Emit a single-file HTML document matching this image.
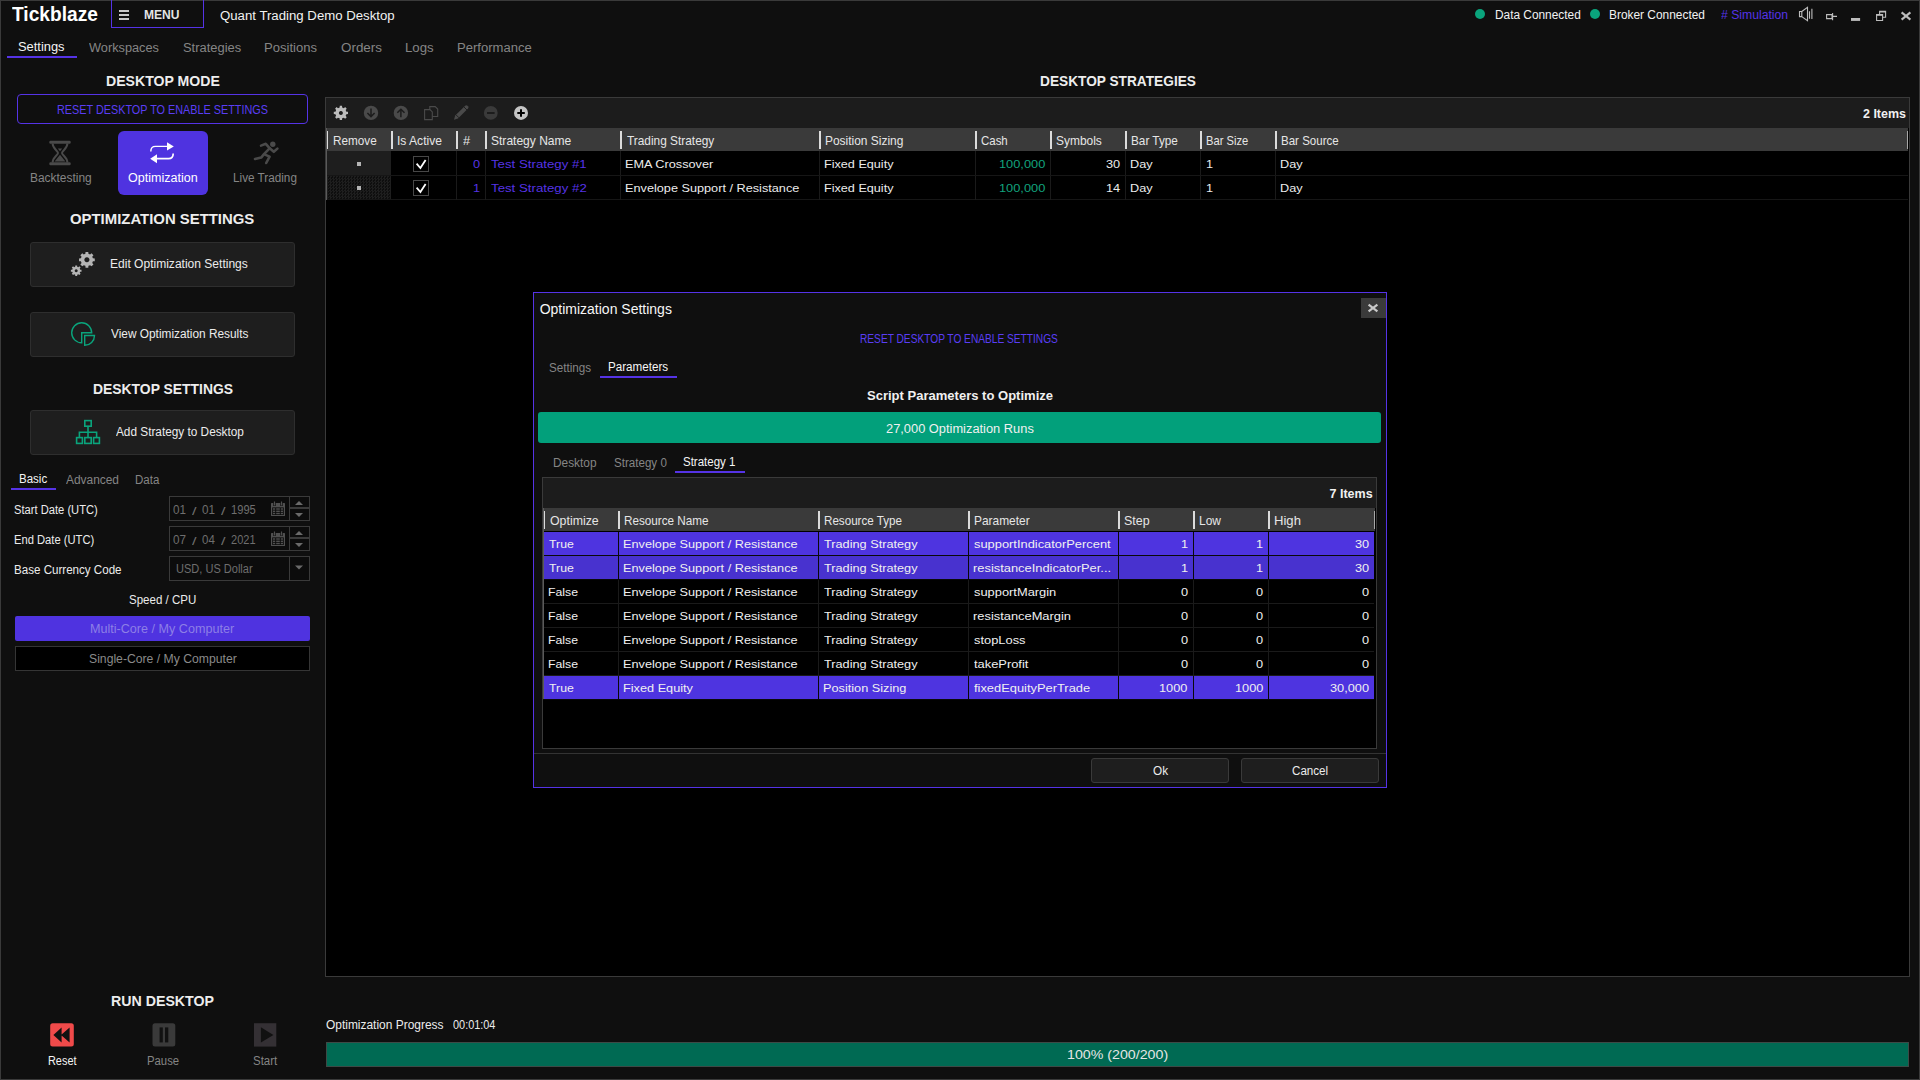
<!DOCTYPE html>
<html><head><meta charset="utf-8"><style>
*{box-sizing:border-box;margin:0;padding:0}
html,body{width:1920px;height:1080px;overflow:hidden;background:#0f0f0f;font-family:"Liberation Sans",sans-serif;color:#ececec}
.a{position:absolute}
.t{position:absolute;white-space:nowrap;line-height:1;transform-origin:0 0}
</style></head><body>
<div class="a" style="left:0;top:0;width:1920px;height:1080px;border:1px solid #3a3a3a"></div>
<div class="t" style="font-size:20px;color:#ffffff;font-weight:bold;left:11.78px;top:4.00px;transform:scaleX(0.9574);">Tickblaze</div>
<div class="a" style="left:111px;top:0px;width:93px;height:28px;border:1px solid #5533e6;border-top:none"></div>
<div class="a" style="left:119px;top:10px;width:10px;height:2px;background:#c8c8c8"></div>
<div class="a" style="left:119px;top:14px;width:10px;height:2px;background:#c8c8c8"></div>
<div class="a" style="left:119px;top:18px;width:10px;height:2px;background:#c8c8c8"></div>
<div class="t" style="font-size:12.5px;color:#e4e4e4;font-weight:bold;left:143.59px;top:9.00px;transform:scaleX(0.9655);">MENU</div>
<div class="t" style="font-size:12.5px;color:#f2f2f2;left:219.87px;top:10.00px;transform:scaleX(1.0563);">Quant Trading Demo Desktop</div>
<div class="a" style="left:1475px;top:9px;width:10px;height:10px;border-radius:50%;background:#0aa47c"></div>
<div class="t" style="font-size:12.3px;color:#f2f2f2;left:1494.53px;top:9.00px;transform:scaleX(0.9647);">Data Connected</div>
<div class="a" style="left:1590px;top:9px;width:10px;height:10px;border-radius:50%;background:#0aa47c"></div>
<div class="t" style="font-size:12.3px;color:#f2f2f2;left:1609.22px;top:9.00px;transform:scaleX(0.9679);">Broker Connected</div>
<div class="t" style="font-size:12.3px;color:#5533e6;left:1720.65px;top:9.00px;transform:scaleX(0.9922);"># Simulation</div>
<div class="t" style="font-size:12.3px;color:#f4f4f4;left:18.41px;top:41.00px;transform:scaleX(1.0476);">Settings</div>
<div class="a" style="left:7px;top:56px;width:70px;height:2px;background:#5533e6"></div>
<div class="t" style="font-size:12.3px;color:#858585;left:89.24px;top:42.00px;transform:scaleX(1.0368);">Workspaces</div>
<div class="t" style="font-size:12.3px;color:#858585;left:182.91px;top:42.00px;transform:scaleX(1.0502);">Strategies</div>
<div class="t" style="font-size:12.3px;color:#858585;left:264.13px;top:42.00px;transform:scaleX(1.0608);">Positions</div>
<div class="t" style="font-size:12.3px;color:#858585;left:340.96px;top:42.00px;transform:scaleX(1.0912);">Orders</div>
<div class="t" style="font-size:12.3px;color:#858585;left:405.22px;top:42.00px;transform:scaleX(1.0746);">Logs</div>
<div class="t" style="font-size:12.3px;color:#858585;left:457.33px;top:42.00px;transform:scaleX(1.0617);">Performance</div>
<div class="t" style="font-size:15.5px;color:#ededed;font-weight:bold;left:105.56px;top:73.00px;transform:scaleX(0.9090);">DESKTOP MODE</div>
<div class="a" style="left:17px;top:94px;width:291px;height:30px;border:1px solid #5533e6;border-radius:4px"></div>
<div class="t" style="font-size:12.5px;color:#5a3ef5;left:56.51px;top:104.00px;transform:scaleX(0.8669);">RESET DESKTOP TO ENABLE SETTINGS</div>
<div class="a" style="left:118px;top:131px;width:90px;height:64px;border-radius:6px;background:#4f33e0"></div>
<div class="t" style="font-size:12px;color:#858585;left:29.62px;top:172.00px;transform:scaleX(0.9952);">Backtesting</div>
<div class="t" style="font-size:12px;color:#ffffff;left:128.01px;top:172.00px;transform:scaleX(1.0451);">Optimization</div>
<div class="t" style="font-size:12px;color:#858585;left:233.44px;top:172.00px;transform:scaleX(0.9777);">Live Trading</div>
<div class="t" style="font-size:15.5px;color:#ededed;font-weight:bold;left:70.39px;top:211.00px;transform:scaleX(0.9611);">OPTIMIZATION SETTINGS</div>
<div class="a" style="left:30px;top:242px;width:265px;height:45px;background:#1e1e1e;border:1px solid #2e2e2e;border-radius:3px"></div>
<div class="t" style="font-size:12px;color:#ececec;left:110.41px;top:258.00px;transform:scaleX(1.0030);">Edit Optimization Settings</div>
<div class="a" style="left:30px;top:312px;width:265px;height:45px;background:#1e1e1e;border:1px solid #2e2e2e;border-radius:3px"></div>
<div class="t" style="font-size:12px;color:#ececec;left:111.05px;top:328.00px;transform:scaleX(0.9878);">View Optimization Results</div>
<div class="t" style="font-size:15.5px;color:#ededed;font-weight:bold;left:92.67px;top:381.00px;transform:scaleX(0.8968);">DESKTOP SETTINGS</div>
<div class="a" style="left:30px;top:410px;width:265px;height:45px;background:#1e1e1e;border:1px solid #2e2e2e;border-radius:3px"></div>
<div class="t" style="font-size:12px;color:#ececec;left:116.18px;top:426.00px;transform:scaleX(0.9834);">Add Strategy to Desktop</div>
<div class="t" style="font-size:12px;color:#f4f4f4;left:19.36px;top:473.00px;transform:scaleX(0.9592);">Basic</div>
<div class="a" style="left:11px;top:488px;width:45px;height:2px;background:#5533e6"></div>
<div class="t" style="font-size:12px;color:#858585;left:65.58px;top:474.00px;transform:scaleX(0.9928);">Advanced</div>
<div class="t" style="font-size:12px;color:#858585;left:135.46px;top:474.00px;transform:scaleX(0.9600);">Data</div>
<div class="t" style="font-size:12px;color:#ececec;left:14.49px;top:504.00px;transform:scaleX(0.9310);">Start Date (UTC)</div>
<div class="t" style="font-size:12px;color:#ececec;left:14.08px;top:534.00px;transform:scaleX(0.9324);">End Date (UTC)</div>
<div class="t" style="font-size:12px;color:#ececec;left:14.05px;top:564.00px;transform:scaleX(0.9657);">Base Currency Code</div>
<div class="a" style="left:169px;top:496px;width:141px;height:25px;border:1px solid #3a3a3a;background:#0c0c0c"></div>
<div class="a" style="left:289px;top:496px;width:1px;height:25px;background:#3a3a3a"></div>
<div class="a" style="left:289px;top:507px;width:21px;height:2px;background:#3a3a3a"></div>
<div class="t" style="font-size:12px;color:#6e6e6e;left:172.54px;top:504.00px;transform:scaleX(0.9752);">01</div>
<div class="t" style="font-size:12px;color:#6e6e6e;left:201.54px;top:504.00px;transform:scaleX(0.9752);">01</div>
<div class="t" style="font-size:12px;color:#6e6e6e;left:231.15px;top:504.00px;transform:scaleX(0.9294);">1995</div>
<div class="t" style="font-size:10px;color:#6e6e6e;left:192.00px;top:507.00px;transform:scaleX(1.6180);">/</div>
<div class="t" style="font-size:10px;color:#6e6e6e;left:220.60px;top:507.00px;transform:scaleX(1.6180);">/</div>
<div class="a" style="left:169px;top:526px;width:141px;height:25px;border:1px solid #3a3a3a;background:#0c0c0c"></div>
<div class="a" style="left:289px;top:526px;width:1px;height:25px;background:#3a3a3a"></div>
<div class="a" style="left:289px;top:537px;width:21px;height:2px;background:#3a3a3a"></div>
<div class="t" style="font-size:12px;color:#6e6e6e;left:172.54px;top:534.00px;transform:scaleX(0.9766);">07</div>
<div class="t" style="font-size:12px;color:#6e6e6e;left:201.55px;top:534.00px;transform:scaleX(0.9570);">04</div>
<div class="t" style="font-size:12px;color:#6e6e6e;left:231.44px;top:534.00px;transform:scaleX(0.9211);">2021</div>
<div class="t" style="font-size:10px;color:#6e6e6e;left:192.00px;top:537.00px;transform:scaleX(1.6180);">/</div>
<div class="t" style="font-size:10px;color:#6e6e6e;left:220.60px;top:537.00px;transform:scaleX(1.6180);">/</div>
<div class="a" style="left:169px;top:556px;width:141px;height:25px;border:1px solid #3a3a3a;background:#0c0c0c"></div>
<div class="a" style="left:289px;top:556px;width:1px;height:25px;background:#3a3a3a"></div>
<div class="t" style="font-size:12px;color:#6e6e6e;left:175.65px;top:563.00px;transform:scaleX(0.9193);">USD, US Dollar</div>
<div class="t" style="font-size:12px;color:#ececec;left:128.68px;top:594.00px;transform:scaleX(0.9595);">Speed / CPU</div>
<div class="a" style="left:15px;top:616px;width:295px;height:25px;background:#4f33e0;border-radius:2px"></div>
<div class="t" style="font-size:12px;color:#8d7fe6;left:90.27px;top:623.00px;transform:scaleX(1.0493);">Multi-Core / My Computer</div>
<div class="a" style="left:15px;top:646px;width:295px;height:25px;background:#000;border:1px solid #353535"></div>
<div class="t" style="font-size:12px;color:#8a8a8a;left:88.65px;top:653.00px;transform:scaleX(1.0163);">Single-Core / My Computer</div>
<div class="t" style="font-size:15.5px;color:#ededed;font-weight:bold;left:110.65px;top:993.00px;transform:scaleX(0.9155);">RUN DESKTOP</div>
<div class="t" style="font-size:12px;color:#f4f4f4;left:47.51px;top:1055.00px;transform:scaleX(0.9080);">Reset</div>
<div class="t" style="font-size:12px;color:#858585;left:147.37px;top:1055.00px;transform:scaleX(0.9442);">Pause</div>
<div class="t" style="font-size:12px;color:#858585;left:252.78px;top:1055.00px;transform:scaleX(0.9591);">Start</div>
<div class="t" style="font-size:15.5px;color:#ededed;font-weight:bold;left:1039.58px;top:73.00px;transform:scaleX(0.8833);">DESKTOP STRATEGIES</div>
<div class="a" style="left:325px;top:97px;width:1585px;height:880px;background:#000;border:1px solid #3a3a3a"></div>
<div class="a" style="left:326px;top:98px;width:1583px;height:30px;background:#1c1c1c"></div>
<div class="t" style="font-size:12.5px;color:#f0f0f0;font-weight:bold;left:1862.77px;top:108.00px;transform:scaleX(0.9965);">2 Items</div>
<div class="a" style="left:326px;top:128px;width:1582px;height:23px;background:#3a3a3a"></div>
<div class="a" style="left:326px;top:131px;width:2px;height:18px;background:#dcdcdc"></div>
<div class="a" style="left:391px;top:131px;width:2px;height:18px;background:#dcdcdc"></div>
<div class="a" style="left:456px;top:131px;width:2px;height:18px;background:#dcdcdc"></div>
<div class="a" style="left:485px;top:131px;width:2px;height:18px;background:#dcdcdc"></div>
<div class="a" style="left:620px;top:131px;width:2px;height:18px;background:#dcdcdc"></div>
<div class="a" style="left:819px;top:131px;width:2px;height:18px;background:#dcdcdc"></div>
<div class="a" style="left:975px;top:131px;width:2px;height:18px;background:#dcdcdc"></div>
<div class="a" style="left:1050px;top:131px;width:2px;height:18px;background:#dcdcdc"></div>
<div class="a" style="left:1125px;top:131px;width:2px;height:18px;background:#dcdcdc"></div>
<div class="a" style="left:1200px;top:131px;width:2px;height:18px;background:#dcdcdc"></div>
<div class="a" style="left:1275px;top:131px;width:2px;height:18px;background:#dcdcdc"></div>
<div class="a" style="left:1907px;top:131px;width:1px;height:18px;background:#a8a8a8"></div>
<div class="t" style="font-size:12.2px;color:#e6e6e6;left:332.64px;top:135.00px;transform:scaleX(0.9624);">Remove</div>
<div class="t" style="font-size:12.2px;color:#e6e6e6;left:397.29px;top:135.00px;transform:scaleX(0.9903);">Is Active</div>
<div class="t" style="font-size:12.2px;color:#e6e6e6;left:462.94px;top:135.00px;transform:scaleX(1.0498);">#</div>
<div class="t" style="font-size:12.2px;color:#e6e6e6;left:491.35px;top:135.00px;transform:scaleX(0.9875);">Strategy Name</div>
<div class="t" style="font-size:12.2px;color:#e6e6e6;left:627.23px;top:135.00px;transform:scaleX(0.9736);">Trading Strategy</div>
<div class="t" style="font-size:12.2px;color:#e6e6e6;left:825.42px;top:135.00px;transform:scaleX(0.9800);">Position Sizing</div>
<div class="t" style="font-size:12.2px;color:#e6e6e6;left:981.32px;top:135.00px;transform:scaleX(0.9393);">Cash</div>
<div class="t" style="font-size:12.2px;color:#e6e6e6;left:1056.36px;top:135.00px;transform:scaleX(0.9795);">Symbols</div>
<div class="t" style="font-size:12.2px;color:#e6e6e6;left:1131.33px;top:135.00px;transform:scaleX(0.9656);">Bar Type</div>
<div class="t" style="font-size:12.2px;color:#e6e6e6;left:1206.38px;top:135.00px;transform:scaleX(0.9164);">Bar Size</div>
<div class="t" style="font-size:12.2px;color:#e6e6e6;left:1281.35px;top:135.00px;transform:scaleX(0.9457);">Bar Source</div>
<div class="a" style="left:326px;top:151px;width:65px;height:24px;background:#1e1e1e"></div>
<div class="a" style="left:326px;top:175px;width:1582px;height:1px;background:#161616"></div>
<div class="a" style="left:456px;top:151px;width:1px;height:24px;background:#1a1a1a"></div>
<div class="a" style="left:485px;top:151px;width:1px;height:24px;background:#1a1a1a"></div>
<div class="a" style="left:620px;top:151px;width:1px;height:24px;background:#1a1a1a"></div>
<div class="a" style="left:819px;top:151px;width:1px;height:24px;background:#1a1a1a"></div>
<div class="a" style="left:975px;top:151px;width:1px;height:24px;background:#1a1a1a"></div>
<div class="a" style="left:1050px;top:151px;width:1px;height:24px;background:#1a1a1a"></div>
<div class="a" style="left:1125px;top:151px;width:1px;height:24px;background:#1a1a1a"></div>
<div class="a" style="left:1200px;top:151px;width:1px;height:24px;background:#1a1a1a"></div>
<div class="a" style="left:1275px;top:151px;width:1px;height:24px;background:#1a1a1a"></div>
<div class="a" style="left:357px;top:162px;width:4px;height:4px;background:#b4b4b4"></div>
<div class="a" style="left:413px;top:156px;width:16px;height:16px;border:1px solid #474747;background:#000"></div>
<svg class="a" style="left:413px;top:156px" width="16" height="16" viewBox="413 156 16 16"><path d="M416.6,163.6 L420.4,168 L425.6,160" fill="none" stroke="#ffffff" stroke-width="1.8"/></svg>
<div class="t" style="font-size:11.6px;color:#5533e6;left:472.80px;top:158.00px;transform:scaleX(1.1000);">0</div>
<div class="t" style="font-size:11.6px;color:#5533e6;left:490.80px;top:158.00px;transform:scaleX(1.1428);">Test Strategy #1</div>
<div class="t" style="font-size:11.6px;color:#ececec;left:625.16px;top:158.00px;transform:scaleX(1.0950);">EMA Crossover</div>
<div class="t" style="font-size:11.6px;color:#ececec;left:824.16px;top:158.00px;transform:scaleX(1.0888);">Fixed Equity</div>
<div class="t" style="font-size:11.6px;color:#12a37e;left:998.62px;top:158.00px;transform:scaleX(1.1039);">100,000</div>
<div class="t" style="font-size:11.6px;color:#ececec;left:1106.10px;top:158.00px;transform:scaleX(1.1000);">30</div>
<div class="t" style="font-size:11.6px;color:#ececec;left:1130.16px;top:158.00px;transform:scaleX(1.0950);">Day</div>
<div class="t" style="font-size:11.6px;color:#ececec;left:1205.93px;top:158.00px;transform:scaleX(1.0950);">1</div>
<div class="t" style="font-size:11.6px;color:#ececec;left:1280.46px;top:158.00px;transform:scaleX(1.0950);">Day</div>
<div class="a" style="left:326px;top:176px;width:65px;height:24px;background:repeating-conic-gradient(#1e1e1e 0 25%, #0e0e0e 0 50%) 0 0/3px 3px"></div>
<div class="a" style="left:326px;top:199px;width:1582px;height:1px;background:#161616"></div>
<div class="a" style="left:456px;top:176px;width:1px;height:24px;background:#1a1a1a"></div>
<div class="a" style="left:485px;top:176px;width:1px;height:24px;background:#1a1a1a"></div>
<div class="a" style="left:620px;top:176px;width:1px;height:24px;background:#1a1a1a"></div>
<div class="a" style="left:819px;top:176px;width:1px;height:24px;background:#1a1a1a"></div>
<div class="a" style="left:975px;top:176px;width:1px;height:24px;background:#1a1a1a"></div>
<div class="a" style="left:1050px;top:176px;width:1px;height:24px;background:#1a1a1a"></div>
<div class="a" style="left:1125px;top:176px;width:1px;height:24px;background:#1a1a1a"></div>
<div class="a" style="left:1200px;top:176px;width:1px;height:24px;background:#1a1a1a"></div>
<div class="a" style="left:1275px;top:176px;width:1px;height:24px;background:#1a1a1a"></div>
<div class="a" style="left:357px;top:186px;width:4px;height:4px;background:#b4b4b4"></div>
<div class="a" style="left:413px;top:180px;width:16px;height:16px;border:1px solid #474747;background:#000"></div>
<svg class="a" style="left:413px;top:180px" width="16" height="16" viewBox="413 180 16 16"><path d="M416.6,187.6 L420.4,192 L425.6,184" fill="none" stroke="#ffffff" stroke-width="1.8"/></svg>
<div class="t" style="font-size:11.6px;color:#5533e6;left:472.92px;top:182.00px;transform:scaleX(1.1000);">1</div>
<div class="t" style="font-size:11.6px;color:#5533e6;left:490.80px;top:182.00px;transform:scaleX(1.1430);">Test Strategy #2</div>
<div class="t" style="font-size:11.6px;color:#ececec;left:625.16px;top:182.00px;transform:scaleX(1.0950);">Envelope Support / Resistance</div>
<div class="t" style="font-size:11.6px;color:#ececec;left:824.16px;top:182.00px;transform:scaleX(1.0888);">Fixed Equity</div>
<div class="t" style="font-size:11.6px;color:#12a37e;left:998.62px;top:182.00px;transform:scaleX(1.1039);">100,000</div>
<div class="t" style="font-size:11.6px;color:#ececec;left:1105.98px;top:182.00px;transform:scaleX(1.1000);">14</div>
<div class="t" style="font-size:11.6px;color:#ececec;left:1130.16px;top:182.00px;transform:scaleX(1.0950);">Day</div>
<div class="t" style="font-size:11.6px;color:#ececec;left:1205.93px;top:182.00px;transform:scaleX(1.0950);">1</div>
<div class="t" style="font-size:11.6px;color:#ececec;left:1280.46px;top:182.00px;transform:scaleX(1.0950);">Day</div>
<div class="a" style="left:326px;top:128px;width:1px;height:72px;background:#5a5a5a"></div>
<div class="t" style="font-size:12px;color:#ececec;left:325.83px;top:1019.00px;transform:scaleX(0.9953);">Optimization Progress</div>
<div class="t" style="font-size:12px;color:#ececec;left:452.57px;top:1019.00px;transform:scaleX(0.9085);">00:01:04</div>
<div class="a" style="left:326px;top:1042px;width:1583px;height:25px;background:#006a53;border:1px solid #3c4a46"></div>
<div class="t" style="font-size:13px;color:#e6e6e6;left:1067.42px;top:1048.00px;transform:scaleX(1.0935);">100% (200/200)</div>
<div class="a" style="left:533px;top:292px;width:854px;height:496px;background:#0f0f0f;border:1px solid #5533e6"></div>
<div class="t" style="font-size:14px;color:#f6f6f6;left:539.64px;top:302.00px;">Optimization Settings</div>
<div class="a" style="left:1361px;top:298px;width:25px;height:20px;background:#3a3a3a"></div>
<div class="t" style="font-size:12.5px;color:#5a3ef5;left:860.47px;top:333.00px;transform:scaleX(0.8131);">RESET DESKTOP TO ENABLE SETTINGS</div>
<div class="t" style="font-size:12px;color:#858585;left:548.87px;top:362.00px;transform:scaleX(0.9721);">Settings</div>
<div class="t" style="font-size:12px;color:#f6f6f6;left:608.45px;top:361.00px;transform:scaleX(0.9684);">Parameters</div>
<div class="a" style="left:600px;top:376px;width:77px;height:2px;background:#5533e6"></div>
<div class="t" style="font-size:13.5px;color:#f0f0f0;font-weight:bold;left:866.62px;top:389.00px;transform:scaleX(0.9648);">Script Parameters to Optimize</div>
<div class="a" style="left:538px;top:412px;width:843px;height:31px;background:#02a07b;border-radius:3px"></div>
<div class="t" style="font-size:12px;color:#f0f0f0;left:886.05px;top:423.00px;transform:scaleX(1.0705);">27,000 Optimization Runs</div>
<div class="t" style="font-size:12px;color:#858585;left:552.53px;top:457.00px;transform:scaleX(0.9896);">Desktop</div>
<div class="t" style="font-size:12px;color:#858585;left:613.87px;top:457.00px;transform:scaleX(0.9657);">Strategy 0</div>
<div class="t" style="font-size:12px;color:#f6f6f6;left:683.48px;top:456.00px;transform:scaleX(0.9567);">Strategy 1</div>
<div class="a" style="left:675px;top:471px;width:70px;height:2px;background:#5533e6"></div>
<div class="a" style="left:542px;top:477px;width:835px;height:272px;background:#000;border:1px solid #3a3a3a"></div>
<div class="a" style="left:543px;top:478px;width:833px;height:30px;background:#1c1c1c"></div>
<div class="t" style="font-size:12.5px;color:#f0f0f0;font-weight:bold;left:1329.56px;top:488.00px;">7 Items</div>
<div class="a" style="left:543px;top:508px;width:832px;height:23px;background:#3a3a3a"></div>
<div class="a" style="left:543px;top:511px;width:2px;height:18px;background:#dcdcdc"></div>
<div class="a" style="left:618px;top:511px;width:2px;height:18px;background:#dcdcdc"></div>
<div class="a" style="left:818px;top:511px;width:2px;height:18px;background:#dcdcdc"></div>
<div class="a" style="left:968px;top:511px;width:2px;height:18px;background:#dcdcdc"></div>
<div class="a" style="left:1118px;top:511px;width:2px;height:18px;background:#dcdcdc"></div>
<div class="a" style="left:1193px;top:511px;width:2px;height:18px;background:#dcdcdc"></div>
<div class="a" style="left:1268px;top:511px;width:2px;height:18px;background:#dcdcdc"></div>
<div class="a" style="left:1374px;top:511px;width:1px;height:18px;background:#a8a8a8"></div>
<div class="t" style="font-size:12.2px;color:#e6e6e6;left:549.61px;top:515.00px;transform:scaleX(1.0133);">Optimize</div>
<div class="t" style="font-size:12.2px;color:#e6e6e6;left:624.24px;top:515.00px;transform:scaleX(0.9605);">Resource Name</div>
<div class="t" style="font-size:12.2px;color:#e6e6e6;left:823.55px;top:515.00px;transform:scaleX(0.9538);">Resource Type</div>
<div class="t" style="font-size:12.2px;color:#e6e6e6;left:973.52px;top:515.00px;transform:scaleX(0.9784);">Parameter</div>
<div class="t" style="font-size:12.2px;color:#e6e6e6;left:1123.93px;top:515.00px;transform:scaleX(1.0203);">Step</div>
<div class="t" style="font-size:12.2px;color:#e6e6e6;left:1199.02px;top:515.00px;transform:scaleX(0.9818);">Low</div>
<div class="t" style="font-size:12.2px;color:#e6e6e6;left:1273.93px;top:515.00px;transform:scaleX(1.0736);">High</div>
<div class="a" style="left:543px;top:532px;width:831px;height:23px;background:#4e34e0"></div>
<div class="a" style="left:543px;top:555px;width:831px;height:1px;background:#0a0a0a"></div>
<div class="a" style="left:618px;top:532px;width:1px;height:23px;background:#0a0a0a"></div>
<div class="a" style="left:818px;top:532px;width:1px;height:23px;background:#0a0a0a"></div>
<div class="a" style="left:968px;top:532px;width:1px;height:23px;background:#0a0a0a"></div>
<div class="a" style="left:1118px;top:532px;width:1px;height:23px;background:#0a0a0a"></div>
<div class="a" style="left:1193px;top:532px;width:1px;height:23px;background:#0a0a0a"></div>
<div class="a" style="left:1268px;top:532px;width:1px;height:23px;background:#0a0a0a"></div>
<div class="t" style="font-size:11.6px;color:#f0f0f0;left:549.12px;top:538.00px;transform:scaleX(1.0600);">True</div>
<div class="t" style="font-size:11.6px;color:#f0f0f0;left:623.16px;top:538.00px;transform:scaleX(1.0970);">Envelope Support / Resistance</div>
<div class="t" style="font-size:11.6px;color:#f0f0f0;left:824.21px;top:538.00px;transform:scaleX(1.0970);">Trading Strategy</div>
<div class="t" style="font-size:11.6px;color:#f0f0f0;left:973.64px;top:538.00px;transform:scaleX(1.1100);">supportIndicatorPercent</div>
<div class="t" style="font-size:11.6px;color:#f0f0f0;left:1180.82px;top:538.00px;transform:scaleX(1.1000);">1</div>
<div class="t" style="font-size:11.6px;color:#f0f0f0;left:1255.92px;top:538.00px;transform:scaleX(1.1000);">1</div>
<div class="t" style="font-size:11.6px;color:#f0f0f0;left:1355.00px;top:538.00px;transform:scaleX(1.1000);">30</div>
<div class="a" style="left:543px;top:556px;width:831px;height:23px;background:#4832cf"></div>
<div class="a" style="left:543px;top:579px;width:831px;height:1px;background:#0a0a0a"></div>
<div class="a" style="left:618px;top:556px;width:1px;height:23px;background:#0a0a0a"></div>
<div class="a" style="left:818px;top:556px;width:1px;height:23px;background:#0a0a0a"></div>
<div class="a" style="left:968px;top:556px;width:1px;height:23px;background:#0a0a0a"></div>
<div class="a" style="left:1118px;top:556px;width:1px;height:23px;background:#0a0a0a"></div>
<div class="a" style="left:1193px;top:556px;width:1px;height:23px;background:#0a0a0a"></div>
<div class="a" style="left:1268px;top:556px;width:1px;height:23px;background:#0a0a0a"></div>
<div class="t" style="font-size:11.6px;color:#f0f0f0;left:549.12px;top:562.00px;transform:scaleX(1.0600);">True</div>
<div class="t" style="font-size:11.6px;color:#f0f0f0;left:623.16px;top:562.00px;transform:scaleX(1.0970);">Envelope Support / Resistance</div>
<div class="t" style="font-size:11.6px;color:#f0f0f0;left:824.21px;top:562.00px;transform:scaleX(1.0970);">Trading Strategy</div>
<div class="t" style="font-size:11.6px;color:#f0f0f0;left:973.14px;top:562.00px;transform:scaleX(1.1100);">resistanceIndicatorPer...</div>
<div class="t" style="font-size:11.6px;color:#f0f0f0;left:1180.82px;top:562.00px;transform:scaleX(1.1000);">1</div>
<div class="t" style="font-size:11.6px;color:#f0f0f0;left:1255.92px;top:562.00px;transform:scaleX(1.1000);">1</div>
<div class="t" style="font-size:11.6px;color:#f0f0f0;left:1355.00px;top:562.00px;transform:scaleX(1.1000);">30</div>
<div class="a" style="left:543px;top:603px;width:831px;height:1px;background:#1a1a1a"></div>
<div class="a" style="left:618px;top:580px;width:1px;height:24px;background:#1a1a1a"></div>
<div class="a" style="left:818px;top:580px;width:1px;height:24px;background:#1a1a1a"></div>
<div class="a" style="left:968px;top:580px;width:1px;height:24px;background:#1a1a1a"></div>
<div class="a" style="left:1118px;top:580px;width:1px;height:24px;background:#1a1a1a"></div>
<div class="a" style="left:1193px;top:580px;width:1px;height:24px;background:#1a1a1a"></div>
<div class="a" style="left:1268px;top:580px;width:1px;height:24px;background:#1a1a1a"></div>
<div class="t" style="font-size:11.6px;color:#f0f0f0;left:548.39px;top:586.00px;transform:scaleX(1.0600);">False</div>
<div class="t" style="font-size:11.6px;color:#f0f0f0;left:623.16px;top:586.00px;transform:scaleX(1.0970);">Envelope Support / Resistance</div>
<div class="t" style="font-size:11.6px;color:#f0f0f0;left:824.21px;top:586.00px;transform:scaleX(1.0970);">Trading Strategy</div>
<div class="t" style="font-size:11.6px;color:#f0f0f0;left:973.64px;top:586.00px;transform:scaleX(1.1100);">supportMargin</div>
<div class="t" style="font-size:11.6px;color:#f0f0f0;left:1180.70px;top:586.00px;transform:scaleX(1.1000);">0</div>
<div class="t" style="font-size:11.6px;color:#f0f0f0;left:1255.80px;top:586.00px;transform:scaleX(1.1000);">0</div>
<div class="t" style="font-size:11.6px;color:#f0f0f0;left:1362.10px;top:586.00px;transform:scaleX(1.1000);">0</div>
<div class="a" style="left:543px;top:627px;width:831px;height:1px;background:#1a1a1a"></div>
<div class="a" style="left:618px;top:604px;width:1px;height:24px;background:#1a1a1a"></div>
<div class="a" style="left:818px;top:604px;width:1px;height:24px;background:#1a1a1a"></div>
<div class="a" style="left:968px;top:604px;width:1px;height:24px;background:#1a1a1a"></div>
<div class="a" style="left:1118px;top:604px;width:1px;height:24px;background:#1a1a1a"></div>
<div class="a" style="left:1193px;top:604px;width:1px;height:24px;background:#1a1a1a"></div>
<div class="a" style="left:1268px;top:604px;width:1px;height:24px;background:#1a1a1a"></div>
<div class="t" style="font-size:11.6px;color:#f0f0f0;left:548.39px;top:610.00px;transform:scaleX(1.0600);">False</div>
<div class="t" style="font-size:11.6px;color:#f0f0f0;left:623.16px;top:610.00px;transform:scaleX(1.0970);">Envelope Support / Resistance</div>
<div class="t" style="font-size:11.6px;color:#f0f0f0;left:824.21px;top:610.00px;transform:scaleX(1.0970);">Trading Strategy</div>
<div class="t" style="font-size:11.6px;color:#f0f0f0;left:973.14px;top:610.00px;transform:scaleX(1.1100);">resistanceMargin</div>
<div class="t" style="font-size:11.6px;color:#f0f0f0;left:1180.70px;top:610.00px;transform:scaleX(1.1000);">0</div>
<div class="t" style="font-size:11.6px;color:#f0f0f0;left:1255.80px;top:610.00px;transform:scaleX(1.1000);">0</div>
<div class="t" style="font-size:11.6px;color:#f0f0f0;left:1362.10px;top:610.00px;transform:scaleX(1.1000);">0</div>
<div class="a" style="left:543px;top:651px;width:831px;height:1px;background:#1a1a1a"></div>
<div class="a" style="left:618px;top:628px;width:1px;height:24px;background:#1a1a1a"></div>
<div class="a" style="left:818px;top:628px;width:1px;height:24px;background:#1a1a1a"></div>
<div class="a" style="left:968px;top:628px;width:1px;height:24px;background:#1a1a1a"></div>
<div class="a" style="left:1118px;top:628px;width:1px;height:24px;background:#1a1a1a"></div>
<div class="a" style="left:1193px;top:628px;width:1px;height:24px;background:#1a1a1a"></div>
<div class="a" style="left:1268px;top:628px;width:1px;height:24px;background:#1a1a1a"></div>
<div class="t" style="font-size:11.6px;color:#f0f0f0;left:548.39px;top:634.00px;transform:scaleX(1.0600);">False</div>
<div class="t" style="font-size:11.6px;color:#f0f0f0;left:623.16px;top:634.00px;transform:scaleX(1.0970);">Envelope Support / Resistance</div>
<div class="t" style="font-size:11.6px;color:#f0f0f0;left:824.21px;top:634.00px;transform:scaleX(1.0970);">Trading Strategy</div>
<div class="t" style="font-size:11.6px;color:#f0f0f0;left:973.64px;top:634.00px;transform:scaleX(1.1100);">stopLoss</div>
<div class="t" style="font-size:11.6px;color:#f0f0f0;left:1180.70px;top:634.00px;transform:scaleX(1.1000);">0</div>
<div class="t" style="font-size:11.6px;color:#f0f0f0;left:1255.80px;top:634.00px;transform:scaleX(1.1000);">0</div>
<div class="t" style="font-size:11.6px;color:#f0f0f0;left:1362.10px;top:634.00px;transform:scaleX(1.1000);">0</div>
<div class="a" style="left:543px;top:675px;width:831px;height:1px;background:#1a1a1a"></div>
<div class="a" style="left:618px;top:652px;width:1px;height:24px;background:#1a1a1a"></div>
<div class="a" style="left:818px;top:652px;width:1px;height:24px;background:#1a1a1a"></div>
<div class="a" style="left:968px;top:652px;width:1px;height:24px;background:#1a1a1a"></div>
<div class="a" style="left:1118px;top:652px;width:1px;height:24px;background:#1a1a1a"></div>
<div class="a" style="left:1193px;top:652px;width:1px;height:24px;background:#1a1a1a"></div>
<div class="a" style="left:1268px;top:652px;width:1px;height:24px;background:#1a1a1a"></div>
<div class="t" style="font-size:11.6px;color:#f0f0f0;left:548.39px;top:658.00px;transform:scaleX(1.0600);">False</div>
<div class="t" style="font-size:11.6px;color:#f0f0f0;left:623.16px;top:658.00px;transform:scaleX(1.0970);">Envelope Support / Resistance</div>
<div class="t" style="font-size:11.6px;color:#f0f0f0;left:824.21px;top:658.00px;transform:scaleX(1.0970);">Trading Strategy</div>
<div class="t" style="font-size:11.6px;color:#f0f0f0;left:973.81px;top:658.00px;transform:scaleX(1.1100);">takeProfit</div>
<div class="t" style="font-size:11.6px;color:#f0f0f0;left:1180.70px;top:658.00px;transform:scaleX(1.1000);">0</div>
<div class="t" style="font-size:11.6px;color:#f0f0f0;left:1255.80px;top:658.00px;transform:scaleX(1.1000);">0</div>
<div class="t" style="font-size:11.6px;color:#f0f0f0;left:1362.10px;top:658.00px;transform:scaleX(1.1000);">0</div>
<div class="a" style="left:543px;top:676px;width:831px;height:23px;background:#4e34e0"></div>
<div class="a" style="left:543px;top:699px;width:831px;height:1px;background:#0a0a0a"></div>
<div class="a" style="left:618px;top:676px;width:1px;height:23px;background:#0a0a0a"></div>
<div class="a" style="left:818px;top:676px;width:1px;height:23px;background:#0a0a0a"></div>
<div class="a" style="left:968px;top:676px;width:1px;height:23px;background:#0a0a0a"></div>
<div class="a" style="left:1118px;top:676px;width:1px;height:23px;background:#0a0a0a"></div>
<div class="a" style="left:1193px;top:676px;width:1px;height:23px;background:#0a0a0a"></div>
<div class="a" style="left:1268px;top:676px;width:1px;height:23px;background:#0a0a0a"></div>
<div class="t" style="font-size:11.6px;color:#f0f0f0;left:549.12px;top:682.00px;transform:scaleX(1.0600);">True</div>
<div class="t" style="font-size:11.6px;color:#f0f0f0;left:623.16px;top:682.00px;transform:scaleX(1.0970);">Fixed Equity</div>
<div class="t" style="font-size:11.6px;color:#f0f0f0;left:823.46px;top:682.00px;transform:scaleX(1.0970);">Position Sizing</div>
<div class="t" style="font-size:11.6px;color:#f0f0f0;left:973.82px;top:682.00px;transform:scaleX(1.1100);">fixedEquityPerTrade</div>
<div class="t" style="font-size:11.6px;color:#f0f0f0;left:1159.42px;top:682.00px;transform:scaleX(1.1000);">1000</div>
<div class="t" style="font-size:11.6px;color:#f0f0f0;left:1234.52px;top:682.00px;transform:scaleX(1.1000);">1000</div>
<div class="t" style="font-size:11.6px;color:#f0f0f0;left:1330.18px;top:682.00px;transform:scaleX(1.1000);">30,000</div>
<div class="a" style="left:543px;top:508px;width:1px;height:191px;background:#5a5a5a"></div>
<div class="a" style="left:534px;top:753px;width:852px;height:1px;background:#333"></div>
<div class="a" style="left:1091px;top:758px;width:138px;height:25px;background:#1e1e1e;border:1px solid #3a3a3a;border-radius:3px"></div>
<div class="t" style="font-size:12px;color:#ececec;left:1152.94px;top:765.00px;transform:scaleX(0.9802);">Ok</div>
<div class="a" style="left:1241px;top:758px;width:138px;height:25px;background:#1e1e1e;border:1px solid #3a3a3a;border-radius:3px"></div>
<div class="t" style="font-size:12px;color:#ececec;left:1292.31px;top:765.00px;transform:scaleX(0.9681);">Cancel</div>
<svg class="a" style="left:45px;top:138px" width="30" height="30" viewBox="45 138 30 30"><g fill="#4a4a4a"><rect x="49.3" y="140.8" width="21.4" height="3" rx="1.2"/><rect x="49.3" y="162.2" width="21.4" height="3" rx="1.2"/><path d="M54.6,161.4 L65.4,161.4 L60,154.8Z"/><path d="M57.8,148.6 L62.2,148.6 L60,151.2Z"/></g><path d="M52.6,143.5 C52.6,148.6 58,150.8 58,153 C58,155.2 52.6,157.4 52.6,162.5 M67.4,143.5 C67.4,148.6 62,150.8 62,153 C62,155.2 67.4,157.4 67.4,162.5" fill="none" stroke="#4a4a4a" stroke-width="2"/></svg>
<svg class="a" style="left:146px;top:139px" width="32" height="28" viewBox="146 139 32 28"><g fill="none" stroke="#ffffff" stroke-width="1.4"><path d="M150.8,151.5 C150.8,148.5 152.5,146.4 155.5,146.4 L167.5,146.4"/><path d="M173.2,153.5 C173.2,156.5 171.5,158.7 168.5,158.7 L156.5,158.7" stroke-width="1.7"/></g><g fill="#ffffff"><path d="M167,142.2 L173.8,146.4 L167,150.6Z"/><path d="M157,154.2 L150.2,158.7 L157,163.2Z"/></g></svg>
<svg class="a" style="left:250px;top:138px" width="32" height="30" viewBox="250 138 32 30"><circle cx="272.8" cy="144.3" r="2.7" fill="#4a4a4a"/><g fill="none" stroke="#4a4a4a" stroke-width="2.6" stroke-linecap="round" stroke-linejoin="round"><path d="M261,145.6 L265.8,143.8 L270,148.6 L273.8,151.8 L277.4,148.6"/><path d="M269.6,148.4 L264,154.2 L261.2,157.6 L255,159"/><path d="M264.4,154.4 L269.6,156.6 L266.2,163"/></g></svg>
<svg class="a" style="left:64px;top:248px" width="34" height="32" viewBox="64 248 34 32"><path fill="#b4b4b4" fill-rule="evenodd" d="M85.38,253.79 L85.52,251.92 L88.28,251.92 L88.42,253.79 L90.07,254.47 L91.50,253.25 L93.45,255.20 L92.23,256.63 L92.91,258.28 L94.78,258.42 L94.78,261.18 L92.91,261.32 L92.23,262.97 L93.45,264.40 L91.50,266.35 L90.07,265.13 L88.42,265.81 L88.28,267.68 L85.52,267.68 L85.38,265.81 L83.73,265.13 L82.30,266.35 L80.35,264.40 L81.57,262.97 L80.89,261.32 L79.02,261.18 L79.02,258.42 L80.89,258.28 L81.57,256.63 L80.35,255.20 L82.30,253.25 L83.73,254.47Z M86.9,257.3 a2.5,2.5 0 1,0 0.01,0Z"/><path fill="#b4b4b4" fill-rule="evenodd" d="M75.19,266.73 L75.27,265.38 L77.13,265.38 L77.21,266.73 L78.30,267.18 L79.31,266.28 L80.62,267.59 L79.72,268.60 L80.17,269.69 L81.52,269.77 L81.52,271.63 L80.17,271.71 L79.72,272.80 L80.62,273.81 L79.31,275.12 L78.30,274.22 L77.21,274.67 L77.13,276.02 L75.27,276.02 L75.19,274.67 L74.10,274.22 L73.09,275.12 L71.78,273.81 L72.68,272.80 L72.23,271.71 L70.88,271.63 L70.88,269.77 L72.23,269.69 L72.68,268.60 L71.78,267.59 L73.09,266.28 L74.10,267.18Z M76.2,269.2 a1.5,1.5 0 1,0 0.01,0Z"/></svg>
<svg class="a" style="left:66px;top:318px" width="34" height="32" viewBox="66 318 34 32"><g fill="none" stroke="#0aa47c" stroke-width="1.4"><path d="M81.7,342.8 A10,10 0 1,1 91.7,332.8 L81.7,332.8 Z"/><path d="M84.7,335.5 L94.5,335.5 A9.8,9.8 0 0,1 84.7,345.3 Z"/></g></svg>
<svg class="a" style="left:72px;top:416px" width="32" height="32" viewBox="72 416 32 32"><g fill="none" stroke="#0aa47c" stroke-width="1.6"><rect x="84.8" y="420.6" width="6.4" height="5.6"/><path d="M88,426.2 V437.4 M79.4,437.4 V432.2 H96.6 V437.4"/><rect x="76.6" y="437.6" width="5.8" height="5.8"/><rect x="84.8" y="437.6" width="6.4" height="5.8"/><rect x="93.6" y="437.6" width="5.8" height="5.8"/></g></svg>
<svg class="a" style="left:268px;top:500px" width="20" height="16" viewBox="268 500 20 16"><g fill="#505050"><rect x="271" y="503" width="14" height="13" rx="0.5"/></g><g fill="#0c0c0c"><rect x="272.2" y="507.4" width="11.6" height="7.6"/></g><g fill="#505050"><rect x="273" y="508.3" width="2.2" height="1.4"/><rect x="276.2" y="508.3" width="3.6" height="1.4"/><rect x="280.8" y="508.3" width="2.2" height="1.4"/><rect x="273" y="510.6" width="2.2" height="1.6"/><rect x="276.2" y="510.6" width="3.6" height="1.6"/><rect x="280.8" y="510.6" width="2.2" height="1.6"/><rect x="273" y="513" width="2.2" height="1.2"/><rect x="276.2" y="513" width="3.6" height="1.2"/><rect x="280.8" y="513" width="2.2" height="1.2"/></g><g stroke="#0c0c0c" stroke-width="2.4"><path d="M274.5,501 V506 M281.5,501 V506"/></g><g stroke="#505050" stroke-width="1.2"><path d="M274.5,501.5 V505.5 M281.5,501.5 V505.5"/></g></svg>
<svg class="a" style="left:290px;top:496px" width="20" height="25" viewBox="290 496 20 25"><g fill="#6a6a6a"><path d="M295,505 L303,505 L299,501Z"/><path d="M295,513 L303,513 L299,517Z"/></g></svg>
<svg class="a" style="left:268px;top:530px" width="20" height="16" viewBox="268 530 20 16"><g fill="#505050"><rect x="271" y="533" width="14" height="13" rx="0.5"/></g><g fill="#0c0c0c"><rect x="272.2" y="537.4" width="11.6" height="7.6"/></g><g fill="#505050"><rect x="273" y="538.3" width="2.2" height="1.4"/><rect x="276.2" y="538.3" width="3.6" height="1.4"/><rect x="280.8" y="538.3" width="2.2" height="1.4"/><rect x="273" y="540.6" width="2.2" height="1.6"/><rect x="276.2" y="540.6" width="3.6" height="1.6"/><rect x="280.8" y="540.6" width="2.2" height="1.6"/><rect x="273" y="543" width="2.2" height="1.2"/><rect x="276.2" y="543" width="3.6" height="1.2"/><rect x="280.8" y="543" width="2.2" height="1.2"/></g><g stroke="#0c0c0c" stroke-width="2.4"><path d="M274.5,531 V536 M281.5,531 V536"/></g><g stroke="#505050" stroke-width="1.2"><path d="M274.5,531.5 V535.5 M281.5,531.5 V535.5"/></g></svg>
<svg class="a" style="left:290px;top:526px" width="20" height="25" viewBox="290 526 20 25"><g fill="#6a6a6a"><path d="M295,535 L303,535 L299,531Z"/><path d="M295,543 L303,543 L299,547Z"/></g></svg>
<svg class="a" style="left:290px;top:556px" width="20" height="25" viewBox="290 556 20 25"><path d="M295,565.5 L303,565.5 L299,569.5Z" fill="#6a6a6a"/></svg>
<svg class="a" style="left:48px;top:1020px" width="32" height="30" viewBox="48 1020 32 30"><rect x="50.2" y="1023.2" width="23.6" height="23.4" rx="2.5" fill="#f04a4a"/><path d="M53.4,1035 L61.6,1027.4 L61.6,1042.4Z M61,1035 L69.6,1027.4 L69.6,1042.4Z" fill="#111"/></svg>
<svg class="a" style="left:150px;top:1020px" width="30" height="30" viewBox="150 1020 30 30"><rect x="152.5" y="1023.2" width="22.8" height="23.4" rx="2.5" fill="#3a3a3a"/><rect x="159.6" y="1027.4" width="3.2" height="15" fill="#111"/><rect x="165" y="1027.4" width="3.3" height="15" fill="#111"/></svg>
<svg class="a" style="left:252px;top:1020px" width="30" height="30" viewBox="252 1020 30 30"><rect x="254" y="1023.2" width="22.3" height="23.4" fill="#343034"/><path d="M260.9,1027.2 L273.4,1035 L260.9,1042.6Z" fill="#111"/></svg>
<svg class="a" style="left:332px;top:104px" width="200" height="18" viewBox="332 104 200 18"><path fill="#bcbcbc" fill-rule="evenodd" d="M339.65,107.44 L339.77,105.79 L342.03,105.79 L342.15,107.44 L343.87,108.15 L345.13,107.08 L346.72,108.67 L345.65,109.93 L346.36,111.65 L348.01,111.77 L348.01,114.03 L346.36,114.15 L345.65,115.87 L346.72,117.13 L345.13,118.72 L343.87,117.65 L342.15,118.36 L342.03,120.01 L339.77,120.01 L339.65,118.36 L337.93,117.65 L336.67,118.72 L335.08,117.13 L336.15,115.87 L335.44,114.15 L333.79,114.03 L333.79,111.77 L335.44,111.65 L336.15,109.93 L335.08,108.67 L336.67,107.08 L337.93,108.15Z M340.9,110.9 a2,2 0 1,0 0.01,0Z"/><circle cx="371" cy="112.9" r="7.2" fill="#4a4a4a"/><circle cx="400.9" cy="112.9" r="7.2" fill="#4a4a4a"/><g fill="none" stroke="#1c1c1c" stroke-width="1.5"><path d="M371,108.6 V116.8 M367.4,113 L371,116.6 L374.6,113"/><path d="M400.9,117.2 V109 M397.3,112.8 L400.9,109.2 L404.5,112.8"/></g><g fill="none" stroke="#4a4a4a" stroke-width="1.1"><path d="M429.8,109.3 V106.6 H435.2 L437.7,109.1 V116.5 H432.3"/><path d="M424.6,109.6 H430 L432.3,111.9 V119.6 H424.6Z"/></g><path d="M454,119.8 L455.2,115.6 L465.2,105.8 Q466.3,104.8 467.5,105.8 L468,106.3 Q469,107.5 468,108.6 L458,118.5Z" fill="#4a4a4a"/><path d="M456,114.8 L459,117.8 M464,107 L467,110" stroke="#1c1c1c" stroke-width="0.9"/><circle cx="490.8" cy="112.9" r="6.9" fill="#3a3a3a"/><rect x="487" y="112" width="7.6" height="2" fill="#1c1c1c"/><circle cx="521" cy="112.9" r="7" fill="#c4c4c4"/><path d="M517.3,112.9 H524.8 M521,109.2 V116.7" stroke="#000" stroke-width="2"/></svg>
<svg class="a" style="left:1796px;top:4px" width="124" height="22" viewBox="1796 4 124 22"><g fill="none" stroke="#bdbdbd" stroke-width="1.1"><path d="M1799.5,11.5 H1801.8 V16.6 H1799.5Z M1801.8,11.5 L1807.5,7.3 V20.7 L1801.8,16.6"/><path d="M1809.5,11.2 V18.7 M1811.9,8.8 V19"/><path d="M1826.6,14.6 H1832 V18.6 H1826.6Z M1832.6,13 V20.2 M1832.6,16.4 H1837"/><path d="M1876.6,14.6 H1882.6 V20.5 H1876.6Z M1879.6,14.2 V11.4 H1885.6 V17.3 H1883"/></g><rect x="1851" y="18" width="9.1" height="2.9" fill="#bdbdbd"/><path d="M1876.4,15.2 H1882.8 M1879.4,12 H1885.8" stroke="#bdbdbd" stroke-width="1.2"/><path d="M1901.6,12.4 L1910.4,19.6 M1910.4,12.4 L1901.6,19.6" stroke="#bdbdbd" stroke-width="2.1"/></svg>
<svg class="a" style="left:1361px;top:298px" width="25" height="20" viewBox="1361 298 25 20"><path d="M1368.6,304.6 L1377.4,311.4 M1377.4,304.6 L1368.6,311.4" stroke="#c8c8c8" stroke-width="2.2"/></svg>
</body></html>
